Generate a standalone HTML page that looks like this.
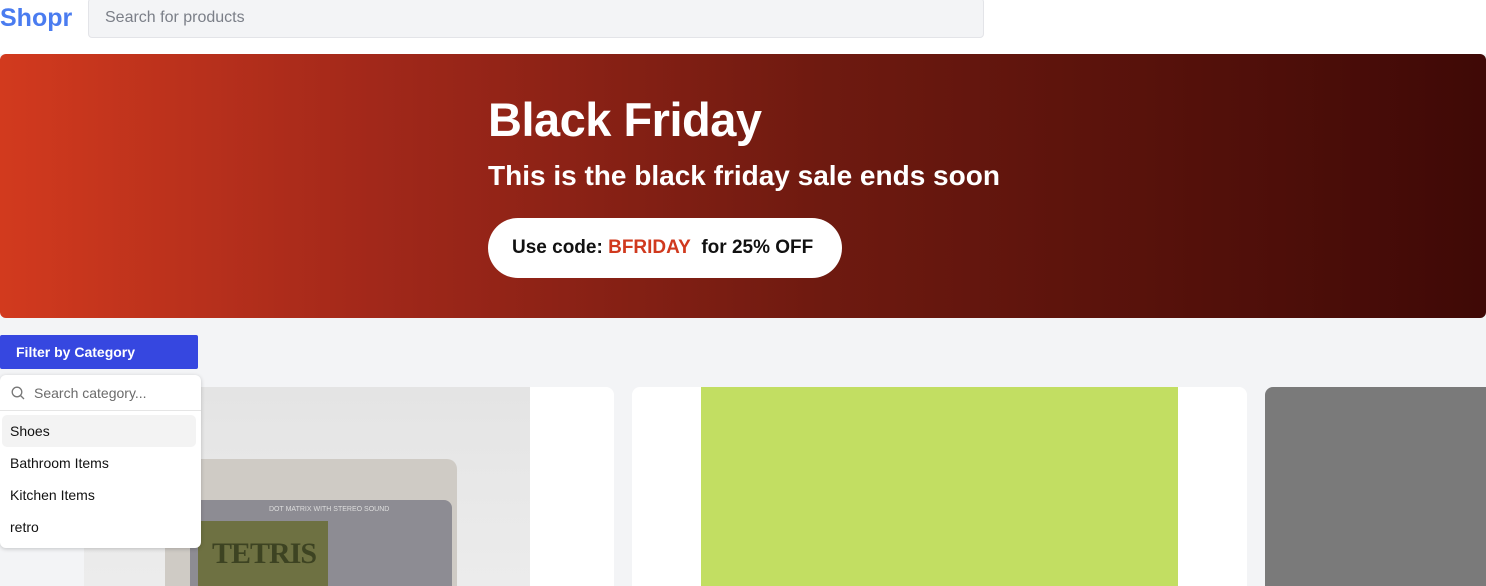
<!DOCTYPE html>
<html><head><style>
*{box-sizing:border-box;margin:0;padding:0}
html,body{overflow:hidden}
body{width:1486px;height:586px;overflow:hidden;background:#f3f4f6;font-family:"Liberation Sans",sans-serif;position:relative}
.top{position:absolute;left:0;top:0;width:1486px;height:54px;background:#fff}
.logo{position:absolute;left:0;top:4px;font-size:25px;font-weight:bold;color:#4a7cf0}
.search{position:absolute;left:88px;top:-2px;width:896px;height:40px;background:#f3f4f6;border:1px solid #e3e4e8;border-radius:4px;font-size:16px;color:#7b7f88;padding:10px 16px}
.banner{position:absolute;left:0;top:54px;width:1486px;height:264px;border-radius:6px;background:linear-gradient(90deg,#d23a1e 0%,#a2281a 25%,#6f1a10 55%,#3f0906 100%)}
.h1{position:absolute;left:488px;top:92px;font-size:47px;font-weight:bold;color:#fff;letter-spacing:-0.5px}
.h2{position:absolute;left:488px;top:160px;font-size:28px;font-weight:bold;color:#fff}
.code{position:absolute;left:488px;top:218px;width:354px;height:60px;border-radius:30px;background:#fff;font-size:19px;font-weight:bold;color:#111;padding:19px 0 0 24px}
.code span{color:#d0391e}
.btn{position:absolute;left:0;top:335px;width:198px;height:34px;background:#3647e0;border-radius:2px;color:#fff;font-size:14px;font-weight:bold;padding:9px 16px}
.card{position:absolute;top:387px;height:199px;background:#fff;border-radius:8px 8px 0 0;overflow:hidden}
.dd{position:absolute;left:0;top:375px;width:201px;height:173px;background:#fff;border-radius:6px;box-shadow:0 1px 4px rgba(0,0,0,.2);font-size:14px;color:#111;z-index:5}
.dd .s{height:36px;border-bottom:1px solid #e5e5e5;padding:10px 0 0 34px;color:#6b6b6b}
.dd .i{height:32px;padding:8px 8px;margin:0 5px 0 2px}
</style></head><body>
<div class="top"></div>
<div class="logo">Shopr</div>
<div class="search">Search for products</div>
<div class="banner"></div>
<div class="h1">Black Friday</div>
<div class="h2">This is the black friday sale ends soon</div>
<div class="code">Use code: <span>BFRIDAY</span>&nbsp; for 25% OFF</div>
<div class="btn">Filter by Category</div>
<div class="card" style="left:84px;width:530px">
 <div style="position:absolute;left:0;top:0;width:446px;height:199px;background:linear-gradient(#e4e4e4,#ececec)"></div>
 <div style="position:absolute;left:81px;top:72px;width:292px;height:127px;background:#cfcbc5;border-radius:10px 10px 0 0"></div>
 <div style="position:absolute;left:106px;top:113px;width:262px;height:86px;background:#8d8c93;border-radius:8px 8px 0 0"></div>
 <div style="position:absolute;left:114px;top:134px;width:130px;height:65px;background:#6e7142"></div>
 <div style="position:absolute;left:128px;top:150px;font-size:30px;font-weight:bold;color:#3d4322;font-family:'Liberation Serif',serif;letter-spacing:-1px">TETRIS</div>
 <div style="position:absolute;left:185px;top:119px;font-size:7px;color:#ddd">DOT MATRIX WITH STEREO SOUND</div>
</div>
<div class="card" style="left:632px;width:615px"><div style="position:absolute;left:69px;top:0;width:477px;height:199px;background:#c2de62"></div></div>
<div class="card" style="left:1265px;width:221px;background:#7a7a7a;border-radius:8px 0 0 0"></div>
<div class="dd">
 <svg style="position:absolute;left:11px;top:11px" width="14" height="14" viewBox="0 0 14 14" fill="none" stroke="#777" stroke-width="1.3"><circle cx="6" cy="6" r="4.8"/><path d="M9.5 9.5L13 13"/></svg>
 <div class="s">Search category...</div>
 <div class="i" style="background:#f3f3f3;border-radius:5px;margin-top:4px">Shoes</div>
 <div class="i">Bathroom Items</div>
 <div class="i">Kitchen Items</div>
 <div class="i">retro</div>
</div>
</body></html>
